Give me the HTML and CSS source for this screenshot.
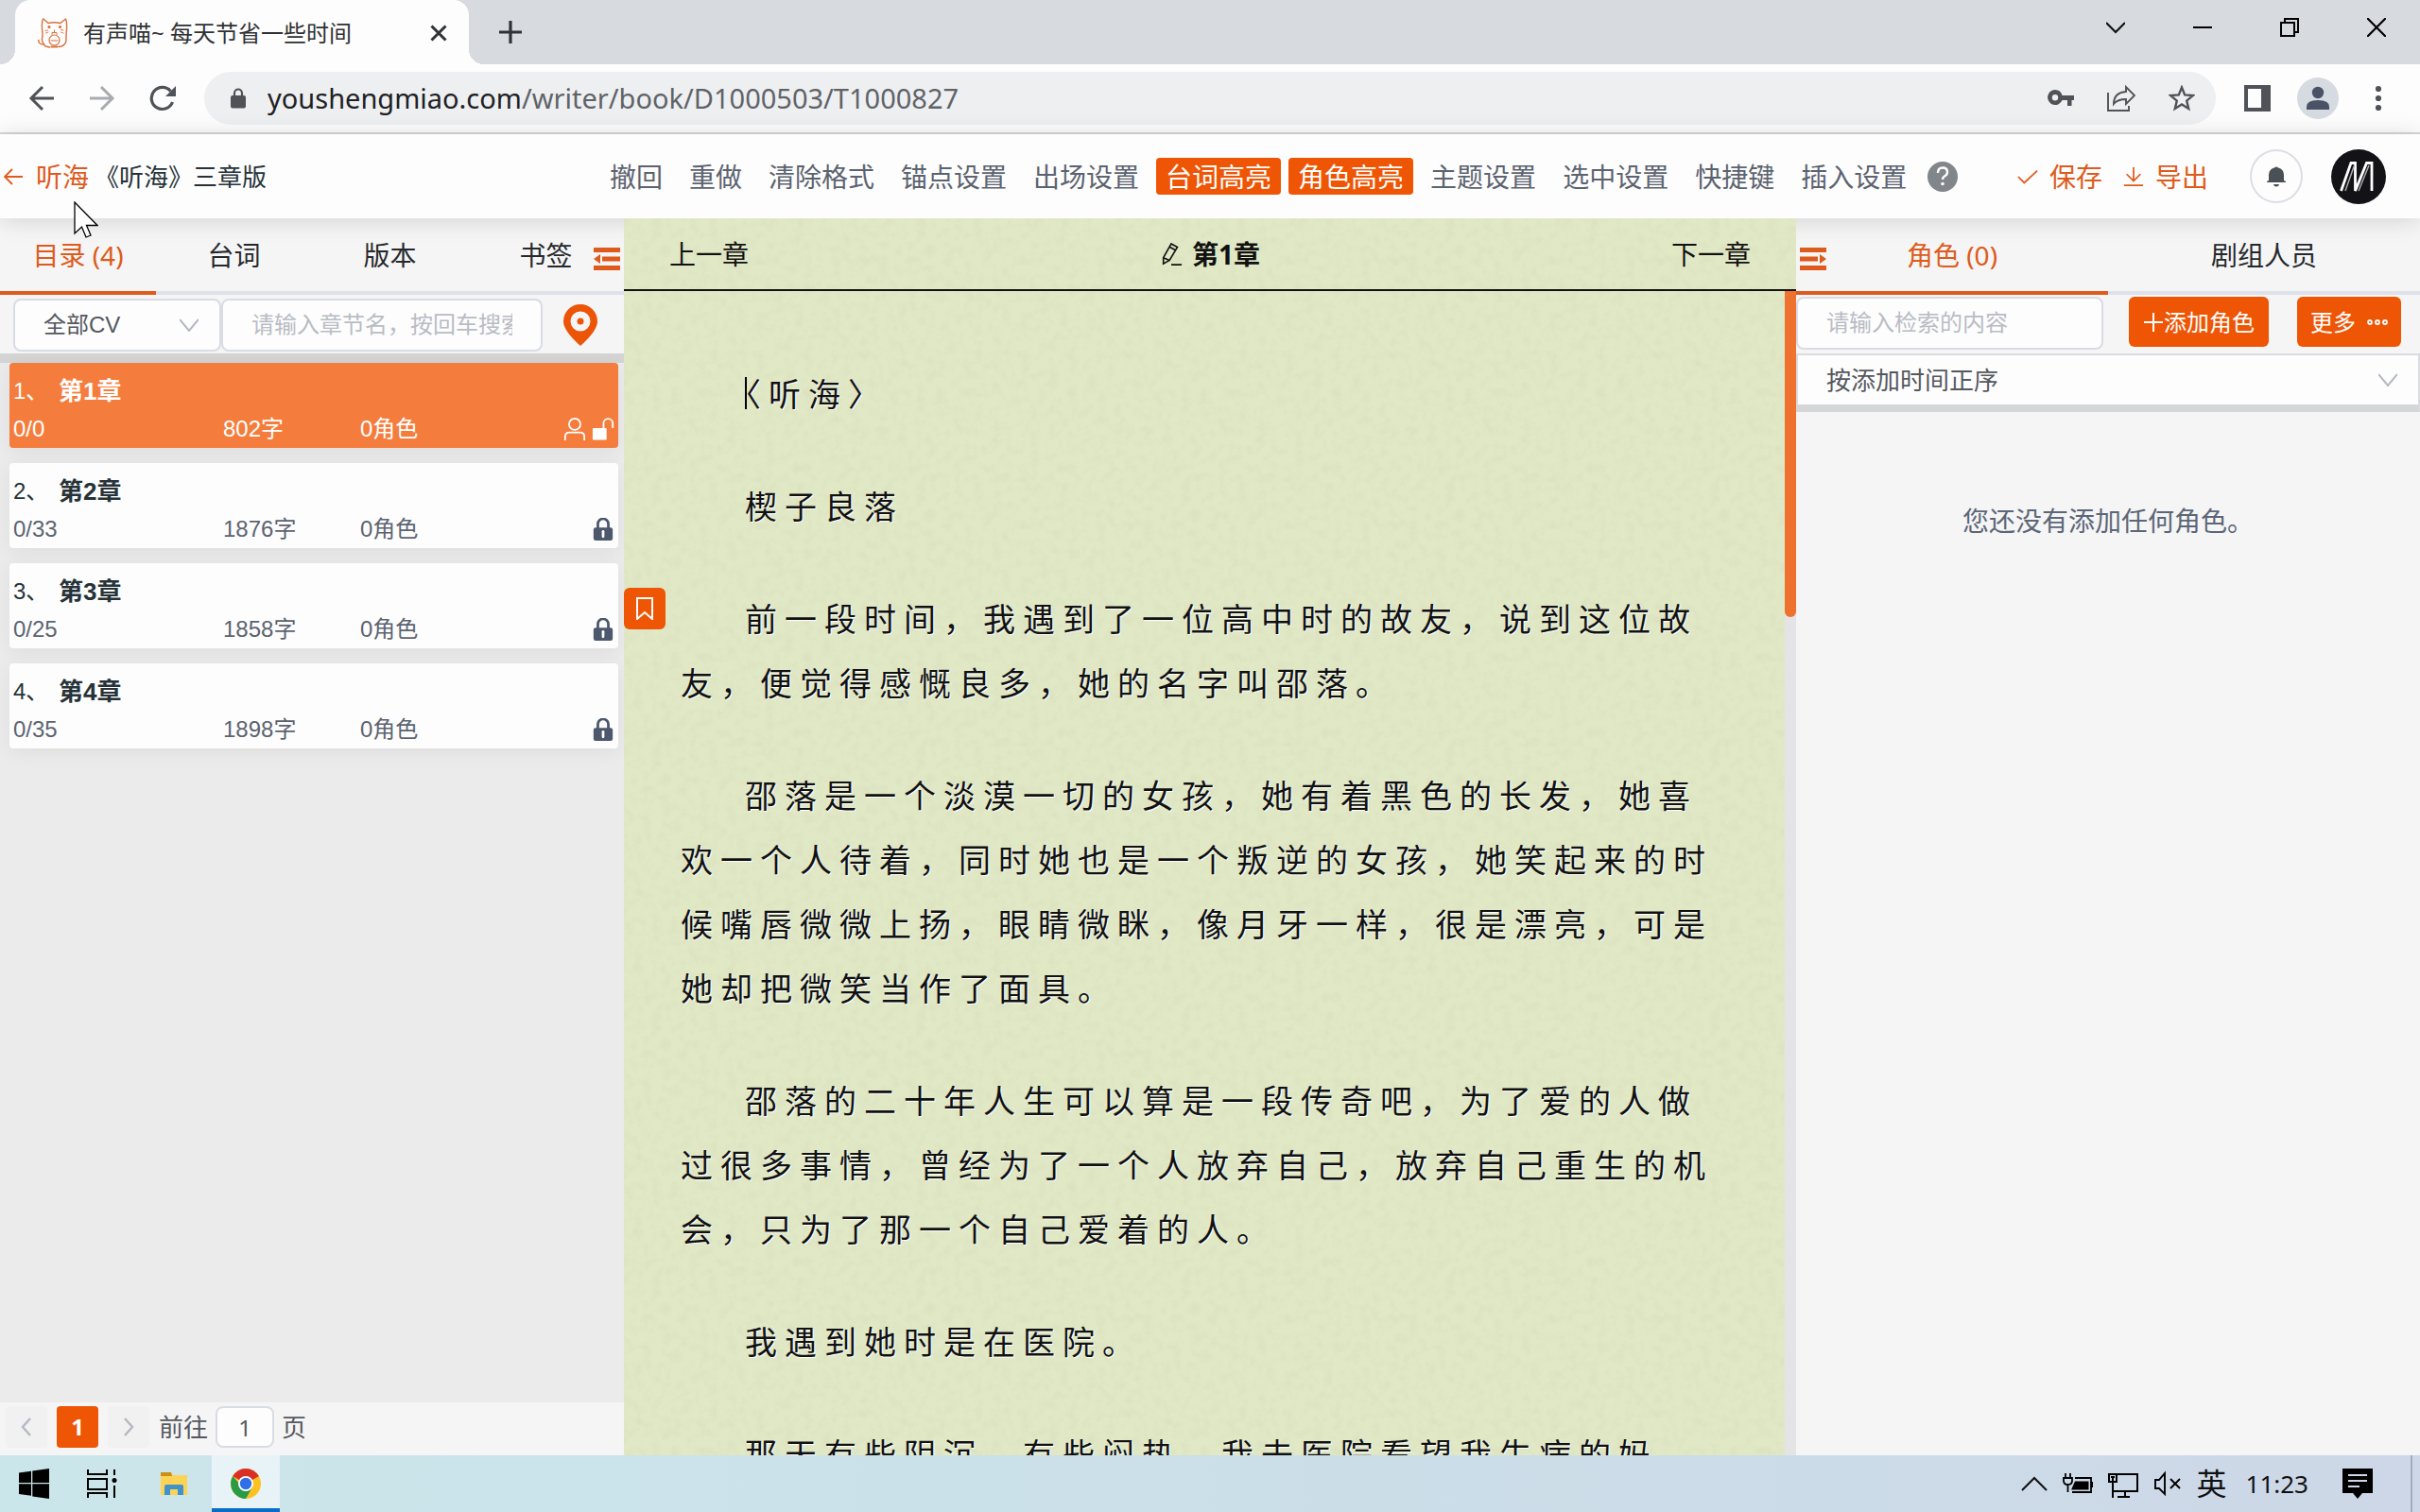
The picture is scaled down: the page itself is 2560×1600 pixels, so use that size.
FILE: index.html
```html
<!DOCTYPE html>
<html lang="zh-CN">
<head>
<meta charset="utf-8">
<title>有声喵~ 每天节省一些时间</title>
<link rel="stylesheet" href="styles.css">
</head>
<body>
<header class="browser">
  <div class="tabstrip">
    <div class="tab">
      <svg class="i32" viewBox="0 0 32 32" fill="none" stroke="#d9703a" stroke-width="1.4" stroke-linecap="round" stroke-linejoin="round"><path d="M6 1C5 1 4 6 4.500 11q.5 4 .5 8-1.500 5 1 8 1 3 4 3.500l2.500.5M6 1l5 4.500Q17 4 24 5.500L29.500 1Q31 4 30.500 12q-.5 5-.5 9 .5 5-2 7-2 2.500-6 2.500"/><path d="M5 28q-5-1-4-4.500"/><ellipse cx="17.500" cy="23.500" rx="5.500" ry="5.500" stroke-width="1.200"/><path d="M15 17.500v-2h5v2M14 24h7M17.500 13v2" stroke-width="1"/><circle cx="12" cy="9.500" r=".9" fill="#d9703a"/><circle cx="23.500" cy="9.500" r=".9" fill="#d9703a"/><path d="M14.500 30.500h6" stroke-width="2.200"/><path d="M8 13.500l2.500-.5M8.500 16l2.500-1M27 13l-2.500-.5M27 16l-2.500-1" stroke-width=".9"/></svg>
      <span class="tab-title">有声喵~ 每天节省一些时间</span>
      <button class="icon-btn tab-close" aria-label="关闭标签页"><svg class="i20" viewBox="0 0 20 20" stroke="#303336" stroke-width="3"><path d="M2.500 2.500l15 15M17.500 2.500l-15 15"/></svg></button>
    </div>
    <button class="icon-btn tab-new" aria-label="新标签页"><svg class="i24" viewBox="0 0 24 24" stroke="#303336" stroke-width="3.200"><path d="M12 0v24M0 12h24"/></svg></button>
    <div class="window-controls">
      <button class="icon-btn" aria-label="搜索标签页"><svg class="i20" viewBox="0 0 20 20" fill="none" stroke="#111" stroke-width="2.200"><path d="M0 5l10 10L20 5"/></svg></button>
      <button class="icon-btn" aria-label="最小化"><svg class="i20" viewBox="0 0 20 20" stroke="#000" stroke-width="2"><path d="M0 10h20"/></svg></button>
      <button class="icon-btn" aria-label="还原"><svg class="i20" viewBox="0 0 20 20" fill="none" stroke="#000" stroke-width="2"><path d="M1 5h14v14H1zM5 5V1h14v14h-4"/></svg></button>
      <button class="icon-btn" aria-label="关闭"><svg class="i20" viewBox="0 0 20 20" stroke="#000" stroke-width="2.200"><path d="M0 0l20 20M20 0L0 20"/></svg></button>
    </div>
  </div>
  <div class="navbar">
    <button class="icon-btn" aria-label="后退"><svg class="i28" viewBox="0 0 28 28" fill="none" stroke="#4f5357" stroke-width="3"><path d="M27 14H3M15 2L3 14l12 12"/></svg></button>
    <button class="icon-btn" aria-label="前进"><svg class="i28" viewBox="0 0 28 28" fill="none" stroke="#a9abae" stroke-width="3"><path d="M1 14h24M13 2l12 12-12 12"/></svg></button>
    <button class="icon-btn" aria-label="重新加载"><svg class="i28" viewBox="0 0 28 28" fill="none" stroke="#4f5357" stroke-width="3.200"><path d="M24.500 18A11.500 11.500 0 1 1 22.500 6.500"/><path d="M28 1v11H17z" fill="#4f5357" stroke="none"/></svg></button>
    <div class="omnibox">
      <svg class="lock" viewBox="0 0 16 22"><path d="M4 9V5.500a4 4 0 0 1 8 0V9" fill="none" stroke="#4f5357" stroke-width="2.200"/><rect y="8" width="16" height="13.500" rx="2" fill="#4f5357"/></svg>
      <span class="url"><b>youshengmiao.com</b>/writer/book/D1000503/T1000827</span>
      <button class="icon-btn" aria-label="密码"><svg class="i28" viewBox="0 0 28 28" fill="#4f5357"><path fill-rule="evenodd" d="M8 5a8 8 0 1 0 7.500 11H21v6h4.500v-6H28v-5H15.500A8 8 0 0 0 8 5zm0 5a3.200 3.200 0 1 1 0 6.400A3.200 3.200 0 0 1 8 10z"/></svg></button>
      <button class="icon-btn" aria-label="分享"><svg class="i30" viewBox="0 0 30 28" fill="none" stroke="#4f5357" stroke-width="1.900"><path d="M1 8v19h22v-5"/><path d="M7 20q0-12 13-13V2l9 9-9 9v-5q-9 0-13 5z"/></svg></button>
      <button class="icon-btn" aria-label="收藏"><svg class="i28" viewBox="0 0 28 28" fill="none" stroke="#4f5357" stroke-width="2.400"><path d="M14 2.500l3.200 7.900 8.500.7-6.500 5.500 2 8.300-7.200-4.500-7.200 4.500 2-8.300-6.500-5.500 8.500-.7z"/></svg></button>
    </div>
    <div class="nav-right">
      <button class="icon-btn" aria-label="侧边栏"><svg class="i28" viewBox="0 0 28 28"><path fill="#4f5357" fill-rule="evenodd" d="M0 0h28v28H0zM4 4v20h14V4z"/></svg></button>
      <button class="icon-btn" aria-label="用户"><svg class="i44" viewBox="0 0 44 44"><circle cx="22" cy="22" r="22" fill="#d6dae1"/><circle cx="22" cy="16" r="6.200" fill="#4a5266"/><path d="M10 34v-3q0-7 12-7t12 7v3z" fill="#4a5266"/></svg></button>
      <button class="icon-btn" aria-label="菜单"><svg class="i28" viewBox="0 0 28 28" fill="#4f5357"><circle cx="14" cy="4" r="3.100"/><circle cx="14" cy="14" r="3.100"/><circle cx="14" cy="24" r="3.100"/></svg></button>
    </div>
  </div>
</header>

<div class="app-header">
  <a class="back" href="#"><svg class="i20" viewBox="0 0 20 20" fill="none" stroke="currentColor" stroke-width="1.800"><path d="M20 10H1M9 2l-8 8 8 8"/></svg>听海</a>
  <span class="book">《听海》三章版</span>
  <nav class="tools">
    <button>撤回</button><button>重做</button><button>清除格式</button><button>锚点设置</button><button>出场设置</button><button class="on">台词高亮</button><button class="on">角色高亮</button><button>主题设置</button><button>选中设置</button><button>快捷键</button><button>插入设置</button>
    <button class="help" aria-label="帮助"><svg class="i32" viewBox="0 0 32 32"><circle cx="16" cy="16" r="16" fill="#80868a"/><path d="M11 12q0-5.500 5-5.500t5 4.500q0 3-3 4.500-2 1-2 3.500" fill="none" stroke="#fff" stroke-width="2.400"/><circle cx="16" cy="23.500" r="1.800" fill="#fff"/></svg></button>
  </nav>
  <div class="actions">
    <button class="act"><svg class="i22" viewBox="0 0 24 24" fill="none" stroke="currentColor" stroke-width="1.900"><path d="M1 12l7 7L23 5"/></svg>保存</button>
    <button class="act"><svg class="i22" viewBox="0 0 24 24" fill="none" stroke="currentColor" stroke-width="1.900"><path d="M12 1v16M4 9l8 8 8-8M1 22h22"/></svg>导出</button>
    <button class="bell" aria-label="通知"><svg class="i22" viewBox="0 0 22 22" fill="#4b5054"><path d="M1 17v-1l2-1V9q0-6 6-7.500 2-2 4 0 6 1.500 6 7.500v6l2 1v1zM8 19h6q-.5 2.500-3 2.500T8 19z"/></svg></button>
    <button class="icon-btn" aria-label="账户"><svg class="i58" viewBox="0 0 58 58"><circle cx="29" cy="29" r="29" fill="#131217"/><path d="M10.500 44L21 14.500h4.500V44L37.500 14.500H43V44" fill="none" stroke="#fff" stroke-width="2.800"/><path d="M15 44L24.500 17M29 44L40 17" stroke="#aaa" stroke-width="1.500"/></svg></button>
  </div>
</div>

<main class="workspace">
  <aside class="panel left">
    <div class="tabs">
      <button class="active">目录 (4)</button><button>台词</button><button>版本</button><button>书签</button>
      <button class="fold fold-left" aria-label="收起"><svg class="i28" viewBox="0 0 28 24" fill="#dd5b1c"><path d="M0 0h28v5H0zM9 9.500h19v5H9zM0 19h28v5H0zM0 12l7-5v10z"/></svg></button>
    </div>
    <div class="filters">
      <div class="select-box"><select aria-label="CV筛选"><option>全部CV</option></select><svg class="chev" viewBox="0 0 20 14" fill="none" stroke="#b4b8c0" stroke-width="2"><path d="M0 1l10 12L20 1"/></svg></div>
      <input class="search" type="text" aria-label="章节搜索" placeholder="请输入章节名，按回车搜索">
      <button class="icon-btn pin" aria-label="定位"><svg class="i44" viewBox="0 0 36 44"><path fill="#ec5407" fill-rule="evenodd" d="M18 0A18 18 0 0 0 0 18q0 10 18 26 18-16 18-26A18 18 0 0 0 18 0zm0 7.500a10.500 10.500 0 1 1 0 21 10.500 10.500 0 0 1 0-21z"/><circle cx="18" cy="18" r="3.500" fill="#ec5407"/></svg></button>
    </div>
    <ul class="chapters">
      <li class="current"><div class="ch-title"><span>1、</span><b>第1章</b></div><div class="ch-meta"><span>0/0</span><span>802字</span><span>0角色</span><span class="ch-icons"><svg class="i24" viewBox="0 0 24 26" fill="none" stroke="#fff" stroke-width="1.900"><circle cx="12" cy="7.500" r="6.500"/><path d="M1 26v-4q0-5 5-5h12q5 0 5 5v4"/></svg><svg class="i24" viewBox="0 0 24 26"><rect y="12" width="16" height="13.500" rx="1" fill="#fff"/><path d="M12.500 12V6.500a5 5 0 0 1 10.500 0V12" fill="none" stroke="#fff" stroke-width="2"/></svg></span></div></li>
      <li><div class="ch-title"><span>2、</span><b>第2章</b></div><div class="ch-meta"><span>0/33</span><span>1876字</span><span>0角色</span><span class="ch-icons"><svg class="i24" viewBox="0 0 24 26"><use href="#padlock"/></svg></span></div></li>
      <li><div class="ch-title"><span>3、</span><b>第3章</b></div><div class="ch-meta"><span>0/25</span><span>1858字</span><span>0角色</span><span class="ch-icons"><svg class="i24" viewBox="0 0 24 26"><use href="#padlock"/></svg></span></div></li>
      <li><div class="ch-title"><span>4、</span><b>第4章</b></div><div class="ch-meta"><span>0/35</span><span>1898字</span><span>0角色</span><span class="ch-icons"><svg class="i24" viewBox="0 0 24 26"><use href="#padlock"/></svg></span></div></li>
    </ul>
    <div class="pager">
      <button class="pg" aria-label="上一页"><svg class="i20" viewBox="0 0 20 20" fill="none" stroke="#b4b8c0" stroke-width="2.400"><path d="M14 1L6 10l8 9"/></svg></button>
      <button class="pg pg-on">1</button>
      <button class="pg" aria-label="下一页"><svg class="i20" viewBox="0 0 20 20" fill="none" stroke="#b4b8c0" stroke-width="2.400"><path d="M6 1l8 9-8 9"/></svg></button>
      <label class="goto">前往<input type="text" value="1">页</label>
    </div>
  </aside>

  <section class="reader">
    <div class="reader-head">
      <button>上一章</button>
      <h1><svg class="i24" viewBox="0 0 24 26" fill="none" stroke="#111" stroke-width="1.800"><path d="M3 17L12 1l7 4-9 15-7 4zM10 4.500l7 4M3 17l7 3M12 25h12"/></svg>第1章</h1>
      <button>下一章</button>
    </div>
    <div class="reader-body">
      <article class="story">
        <p><span class="caret"></span><span class="half">〈</span>听海<span class="half">〉</span></p>
        <p>楔子良落</p>
        <p>前一段时间，我遇到了一位高中时的故友，说到这位故友，便觉得感慨良多，她的名字叫邵落。</p>
        <p>邵落是一个淡漠一切的女孩，她有着黑色的长发，她喜欢一个人待着，同时她也是一个叛逆的女孩，她笑起来的时候嘴唇微微上扬，眼睛微眯，像月牙一样，很是漂亮，可是她却把微笑当作了面具。</p>
        <p>邵落的二十年人生可以算是一段传奇吧，为了爱的人做过很多事情，曾经为了一个人放弃自己，放弃自己重生的机会，只为了那一个自己爱着的人。</p>
        <p>我遇到她时是在医院。</p>
        <p>那天有些阴沉，有些闷热，我去医院看望我生病的妈</p>
      </article>
      <div class="scroll"><div class="thumb"></div></div>
      <button class="mark" aria-label="书签"><svg class="i24" viewBox="0 0 24 24" fill="none" stroke="#fff" stroke-width="2"><path d="M4 1h16v22l-8-7-8 7z"/></svg></button>
    </div>
  </section>

  <aside class="panel right">
    <div class="tabs">
      <button class="active">角色 (0)</button><button>剧组人员</button>
      <button class="fold fold-right" aria-label="收起"><svg class="i28" viewBox="0 0 28 24" fill="#dd5b1c"><path d="M0 0h28v5H0zM0 9.500h19v5H0zM0 19h28v5H0zM28 12l-7-5v10z"/></svg></button>
    </div>
    <div class="role-bar">
      <input class="search" type="text" aria-label="角色检索" placeholder="请输入检索的内容">
      <button class="primary add"><svg class="i22" viewBox="0 0 22 22" stroke="#fff" stroke-width="2"><path d="M11 1v20M1 11h20"/></svg>添加角色</button>
      <button class="primary more">更多<svg class="i22" viewBox="0 0 22 22" fill="none" stroke="#fff" stroke-width="1.800"><circle cx="3" cy="11" r="2"/><circle cx="11" cy="11" r="2"/><circle cx="19" cy="11" r="2"/></svg></button>
    </div>
    <div class="select-box sort"><select aria-label="排序"><option>按添加时间正序</option></select><svg class="chev" viewBox="0 0 20 14" fill="none" stroke="#b4b8c0" stroke-width="2"><path d="M0 1l10 12L20 1"/></svg></div>
    <p class="empty">您还没有添加任何角色。</p>
  </aside>
</main>

<footer class="taskbar">
  <button class="task" aria-label="开始"><svg class="i32" viewBox="0 0 32 32"><path d="M0 4.500L13 2.700V15H0zM14.300 2.500L32 0v15H14.300zM0 16.300h13v12.400L0 27zM14.300 16.300H32V32l-17.700-2.500z"/></svg></button>
  <button class="task" aria-label="任务视图"><svg class="i32" viewBox="0 0 32 32" fill="none" stroke="#000" stroke-width="2"><path d="M1 1v5h20V1M1 31v-5h20v5M1 11h20v11H1zM29 1v6M29 18v13"/><circle cx="29" cy="12.500" r="2.500" fill="#000" stroke="none"/></svg></button>
  <button class="task task-wide" aria-label="文件资源管理器"><svg class="i32" viewBox="0 0 32 32"><path d="M2 4h11l2 3h15v21H2z" fill="#fcd354"/><path d="M2 4h11l1 4H2z" fill="#c98f16"/><path d="M6 28V19q0-2 2-2h16q2 0 2 2v9h-6v-6h-8v6z" fill="#3f92cc"/></svg></button>
  <button class="task task-on" aria-label="Chrome"><svg class="i32" viewBox="0 0 32 32"><circle cx="16" cy="16" r="16" fill="#fdc221"/><path d="M16 16L2.200 8A16 16 0 0 1 29.900 8z" fill="#d92f25"/><path d="M16 16H9.100L2.200 8A16 16 0 0 0 16 32l6.900-12z" fill="#2a9a46"/><circle cx="16" cy="16" r="8" fill="#fff"/><circle cx="16" cy="16" r="6.200" fill="#3070e4"/></svg></button>
  <div class="tray">
    <svg class="i28" viewBox="0 0 28 28" fill="none" stroke="#111" stroke-width="2"><path d="M1 21l13-13 13 13"/></svg>
    <svg class="i32" viewBox="0 0 32 32" fill="none" stroke="#000" stroke-width="1.800"><path d="M3 5v5M8 5v5M1 10h9v3q0 4-4.500 4T1 13zM5.500 17v8M13 10h17v15H10"/><path d="M13 13.500h14.500v9H9z" fill="#000" stroke="none"/><path d="M31 14v6" stroke-width="2.500"/></svg>
    <svg class="i32" viewBox="0 0 32 32" fill="none" stroke="#000" stroke-width="2"><path d="M9 6h22v18H5M18 24v6M10 30h13M5 14v17M1 6h8v8H1zM3 9h4M5 9v4"/></svg>
    <svg class="i30" viewBox="0 0 30 30" fill="none" stroke="#000" stroke-width="1.900"><path d="M2 11v9h4l6 6V4L6 11zM18 10l10 10M28 10L18 20"/></svg>
    <span class="ime">英</span>
    <time>11:23</time>
    <svg class="i32" viewBox="0 0 32 32"><path d="M0 0h32v26H21l-5 6-5-6H0z"/><path d="M6 7h20M6 13h20M6 19h12" stroke="#cdd7e7" stroke-width="2"/></svg>
  </div>
</footer>

<svg class="cursor" viewBox="0 0 26 40"><path d="M1 1v33l7.500-7L13 38l5-2-4.500-10.500H25z" fill="#fff" stroke="#000" stroke-width="1.300"/></svg>
<svg class="defs" aria-hidden="true"><defs><g id="padlock"><path d="M6 12V7a6 6 0 0 1 12 0v5" fill="none" stroke="#4d586c" stroke-width="3"/><rect x="1" y="11" width="22" height="15" rx="2.500" fill="#4d586c"/><path d="M12 15.500v6" stroke="#fff" stroke-width="3" stroke-linecap="round"/></g></defs></svg>
</body>
</html>
```

FILE: styles.css
```css
* { box-sizing: border-box; margin: 0; padding: 0; }
body {
  height: 100vh; overflow: hidden; display: flex; flex-direction: column;
  font-family: "Noto Sans", "Noto Sans CJK SC", sans-serif;
  font-size: 28px; line-height: 40px; color: #303133; background: #fdfdfd;
  text-spacing-trim: space-all;
}
button, input, select { font: inherit; color: inherit; border: 0; background: none; }
button { display: inline-flex; align-items: center; justify-content: center; white-space: nowrap; }
svg { display: block; flex: none; }
.i20 { width: 20px; height: 20px; }
.i22 { width: 22px; height: 22px; }
.i24 { width: 24px; height: 24px; }
.i28 { width: 28px; height: 28px; }
.i30 { width: 30px; height: 30px; }
.i32 { width: 32px; height: 32px; }
.i44 { width: 44px; height: 44px; }
.i58 { width: 58px; height: 58px; }
.defs { position: absolute; width: 0; height: 0; }

/* browser frame */
.browser { border-bottom: 2px solid #d5d6d9; }
.tabstrip { display: flex; height: 68px; padding-left: 16px; background: #d7dadf; }
.tab {
  position: relative; display: flex; align-items: center; gap: 16px; width: 480px; padding: 2px 22px 0 24px;
  background: #fdfdfd; border-radius: 16px 16px 0 0; font-size: 24px;
}
/* flared feet of the active tab */
.tab::before, .tab::after { content: ""; position: absolute; bottom: 0; width: 16px; height: 16px; }
.tab::before { left: -16px; background: radial-gradient(circle at 0 0, transparent 16px, #fdfdfd 16px); }
.tab::after { right: -16px; background: radial-gradient(circle at 100% 0, transparent 16px, #fdfdfd 16px); }
.tab-title { flex: 1; }
.tab-new { width: 88px; }
.window-controls { display: flex; margin-left: auto; height: 58px; }
.window-controls button { width: 92px; }
.navbar { display: flex; align-items: center; height: 72px; padding: 0 30px; gap: 36px; }
.omnibox {
  flex: 1; display: flex; align-items: center; gap: 35px; height: 56px;
  margin-left: -6px; padding: 0 22px 0 28px; border-radius: 28px; background: #eeeff1;
}
.lock { width: 16px; height: 22px; }
.url { flex: 1; margin-left: -12px; font-size: 29px; color: #5f6368; }
.url b { font-weight: 400; color: #202124; }
.nav-right { display: flex; align-items: center; gap: 28px; margin-left: -6px; }

/* editor header */
.app-header { display: flex; align-items: center; height: 89px; background: #fdfdfd; position: relative; z-index: 1; box-shadow: 0 2px 24px rgba(0,0,0,.14); }
.back { display: flex; align-items: center; gap: 14px; width: 100px; padding-left: 4px; color: #dd5b1c; text-decoration: none; }
.book { width: 535px; font-size: 26px; color: #263238; }
.tools { display: flex; gap: 8px; }
.tools button { height: 39px; padding: 0 10px; border-radius: 4px; color: #5c6370; }
.tools .on { background: #ee5504; color: #fff; }
.tools .help { padding: 0 4px; }
.actions { display: flex; align-items: center; margin-left: auto; padding-right: 36px; }
.act { gap: 12px; margin-right: 22px; color: #dd5b1c; }
.bell { width: 56px; height: 57px; margin: 0 30px 0 22px; border: 2px solid #dcdee5; border-radius: 50%; }

/* three columns */
.workspace { flex: 1; min-height: 0; display: grid; grid-template-columns: 660px 1fr 660px; }
.panel { display: flex; flex-direction: column; min-height: 0; background: #f5f5f5; }
.tabs { position: relative; display: flex; height: 81px; }
.tabs button { flex: 1; border-bottom: 4px solid #dfe1ea; color: #26282c; }
.tabs .active { border-color: #dd5b1c; color: #dd5b1c; }
.tabs .fold { position: absolute; top: 29px; border: 0; }
.fold-left { right: 4px; }
.fold-right { left: 4px; }
.select-box { position: relative; }
.select-box select { width: 100%; height: 100%; appearance: none; color: #55585e; }
.chev { position: absolute; right: 22px; top: 50%; width: 20px; height: 14px; margin-top: -7px; }
.filters, .search { font-family: "Liberation Sans", "Noto Sans CJK SC", sans-serif; font-size: 24px; }
.filters { display: flex; align-items: center; height: 72px; padding: 2px 14px 0; border-bottom: 10px solid #d4d4d4; }
.filters .select-box { width: 220px; height: 56px; border: 2px solid #d9dce5; border-radius: 8px; background: #fdfdfd; }
.filters select { padding-left: 30px; }
.search { width: 340px; height: 56px; padding: 0 30px; border: 2px solid #d9dce5; border-radius: 8px; background: #fdfdfd; }
.search::placeholder { color: #b9bcc4; opacity: 1; }
.pin { margin-left: 18px; }

.chapters {
  flex: 1; list-style: none; display: flex; flex-direction: column; gap: 16px; padding: 0 6px 0 10px; background: #ebebeb;
  font-family: "Liberation Sans", "Noto Sans CJK SC", sans-serif; font-size: 24px;
}
.chapters li { height: 90px; padding: 10px 4px; border-radius: 4px; background: #fdfdfd; color: #263238; box-shadow: 0 4px 20px rgba(0,0,0,.06); }
.ch-title { display: flex; }
.ch-title span { width: 48px; }
.ch-title b { font-size: 26px; }
.ch-meta { display: grid; grid-template-columns: 222px 145px 1fr auto; align-items: center; color: #5c6370; }
.ch-icons { display: flex; gap: 6px; }
.chapters .current, .current .ch-meta { color: #fff; }
.chapters .current { background: #f47d3d; }

.pager { display: flex; align-items: center; gap: 10px; height: 56px; padding: 0 0 4px 6px; font-size: 26px; color: #55585e; }
.pg { width: 44px; height: 44px; border-radius: 4px; background: #f1f1f1; }
.pg-on { background: #ee5504; color: #fff; font-weight: 700; font-size: 24px; }
.goto { display: flex; align-items: center; gap: 8px; }
.goto input { width: 62px; height: 44px; border: 2px solid #d9dce5; border-radius: 8px; background: #fdfdfd; text-align: center; font-size: 24px; }

/* reading area */
.reader {
  position: relative; display: flex; flex-direction: column; min-height: 0; z-index: 2; color: #111;
  background: #e1e8c5 url("data:image/svg+xml,%3Csvg xmlns='http://www.w3.org/2000/svg' width='280' height='280'%3E%3Cfilter id='n' x='0' y='0' width='100%25' height='100%25'%3E%3CfeTurbulence type='fractalNoise' baseFrequency='.1' numOctaves='3' seed='4' stitchTiles='stitch'/%3E%3CfeColorMatrix values='0 0 0 0 .68 0 0 0 0 .72 0 0 0 0 .5 1.1 0 0 0 -.45'/%3E%3C/filter%3E%3Crect width='280' height='280' filter='url(%23n)'/%3E%3C/svg%3E");
}
.reader-head { display: flex; align-items: center; justify-content: space-between; height: 77px; padding: 0 48px; border-bottom: 2px solid #111; }
.reader-head h1 { display: flex; align-items: center; gap: 10px; font-size: 28px; font-weight: 700; }
.reader-body { position: relative; flex: 1; min-height: 0; display: flex; overflow: hidden; }
.story {
  flex: 1; padding: 74px 60px 0;
  font-family: "Noto Sans CJK SC", sans-serif; font-size: 34px; line-height: 68px; letter-spacing: 8px; text-shadow: 1px 1px 1px #fff;
}
.story p { text-indent: 68px; margin-bottom: 51px; }
.half { font-feature-settings: "halt"; }
.caret { position: absolute; width: 2px; height: 34px; margin-top: 17px; background: #000; }
.scroll { width: 12px; background: #e4e4e6; }
.thumb { height: 28%; border-radius: 0 0 6px 6px; background: #ee712d; }
.mark { position: absolute; left: 0; top: 314px; width: 44px; height: 44px; border-radius: 6px; background: #ee5504; }

/* cast panel */
.role-bar { display: flex; align-items: flex-start; height: 62px; padding: 2px 20px 0 0; }
.role-bar .search { width: 325px; }
.primary { height: 53px; border-radius: 6px; background: #ee5504; color: #fff; font-size: 24px; }
.add { width: 148px; margin-left: auto; }
.more { width: 110px; margin-left: 30px; gap: 12px; }
.sort { height: 62px; border: 2px solid #dadce0; border-bottom: 8px solid #d5d6d7; background: #fdfdfd; font-size: 26px; }
.sort select { padding-left: 30px; }
.empty { margin-top: 95px; text-align: center; color: #5c6678; }

/* desktop taskbar */
.taskbar { display: flex; height: 60px; background: linear-gradient(90deg, #cbe6eb, #cbe1e9 40%, #cdd7e7); color: #111; }
.task { width: 72px; }
.task-wide { width: 80px; }
.task-on { background: #e7f3f6; box-shadow: inset 0 -4px #0a6ec8; }
.tray { display: flex; align-items: center; gap: 16px; margin-left: auto; margin-right: 8px; padding-right: 40px; border-right: 2px solid #a4adbb; }
.ime { font-size: 32px; }
.tray time { margin: 0 20px 0 4px; font-size: 26px; }
.cursor { position: absolute; left: 78px; top: 213px; width: 26px; height: 40px; z-index: 5; }
```
